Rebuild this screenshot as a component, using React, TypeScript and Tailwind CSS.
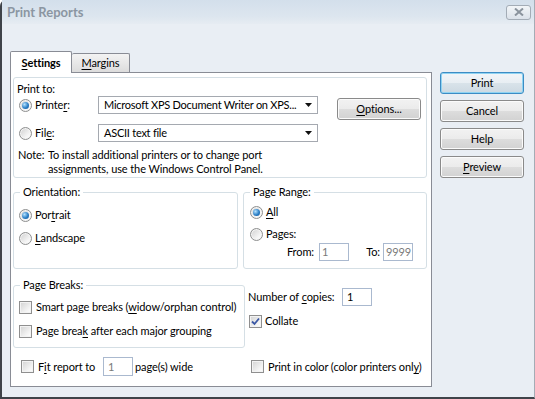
import React from "react";

function Ul({ children }: { children: React.ReactNode }) {
  return <span className="underline decoration-[1px] underline-offset-[2px]">{children}</span>;
}

function Radio({ checked }: { checked?: boolean }) {
  return (
    <span className="flex h-[13px] w-[13px] shrink-0 items-center justify-center rounded-full border border-[#8e8f8f] bg-[linear-gradient(135deg,#cfcfcf,#f6f6f6_70%,#ffffff)] shadow-[inset_0_0_0_1px_#f4f4f4]">
      {checked && (
        <span className="h-[7px] w-[7px] rounded-full bg-[radial-gradient(circle_at_35%_35%,#b4e2ff,#2b7fc6_55%,#0c4f94)]" />
      )}
    </span>
  );
}

function Check({ checked }: { checked?: boolean }) {
  return (
    <span className="flex h-[13px] w-[13px] shrink-0 items-center justify-center border border-[#8f8f8f] bg-[linear-gradient(135deg,#d2d2d2,#f4f4f4_70%,#ffffff)] shadow-[inset_0_0_0_1px_#f3f3f3]">
      {checked && (
        <svg width="11" height="11" viewBox="0 0 11 11">
          <path d="M2 5.5 L4.5 8 L9 2.5" fill="none" stroke="#3b58a5" strokeWidth="1.8" />
        </svg>
      )}
    </span>
  );
}

function Combo({ text }: { text: string }) {
  return (
    <div className="flex h-[18px] w-[220px] items-center border border-[#a5a9b0] bg-white">
      <span className="flex-1 overflow-hidden whitespace-nowrap pl-[5px] tracking-[-0.25px]">{text}</span>
      <span className="flex h-full w-[17px] shrink-0 items-center justify-center">
        <svg width="7" height="4" viewBox="0 0 7 4">
          <path d="M0 0 H7 L3.5 4 Z" fill="#111" />
        </svg>
      </span>
    </div>
  );
}

function Field({ value, dim }: { value: string; dim?: boolean }) {
  return (
    <div
      className={
        dim
          ? "flex h-[18px] w-[30px] shrink-0 items-center border border-[#aab9cf] bg-white pl-[2px] text-[#7a7a7a]"
          : "flex h-[18px] w-[30px] shrink-0 items-center border border-[#aab9cf] bg-white pl-[4px] text-black"
      }
    >
      {value}
    </div>
  );
}

function Btn({ children, focus }: { children: React.ReactNode; focus?: boolean }) {
  return (
    <div
      className={
        focus
          ? "flex h-[22px] w-[84px] items-center justify-center rounded-[3px] border border-[#3c8cc4] bg-[linear-gradient(#f1f5f8,#e8eef3_50%,#d9e3ea_50%,#cdd9e2)] shadow-[inset_0_0_0_1px_#8fd3f2]"
          : "flex h-[22px] w-[84px] items-center justify-center rounded-[3px] border border-[#8a8a8a] bg-[linear-gradient(#f2f2f2,#ebebeb_50%,#dddddd_50%,#d2d2d2)] shadow-[inset_0_0_0_1px_#fbfbfb]"
      }
    >
      {children}
    </div>
  );
}

export default function App() {
  return (
    <div className="h-[399px] w-[535px] overflow-hidden bg-white">
      <div className="flex h-[399px] w-[535px] flex-col rounded-tl-[6px] border-b-2 border-l-2 border-r border-[#3f4349] border-r-[#a4acb5] bg-[#e9eef4] font-['Segoe_UI','Lato',sans-serif] text-[11px] leading-[14px] tracking-[-0.1px] text-black">
        {/* title bar */}
        <div className="flex h-[24px] shrink-0 items-center justify-between bg-[linear-gradient(#d3dfeb,#dde6ef_70%,#e6ecf2)] pl-[5px] pr-[3px]">
          <span className="text-[13px] font-bold tracking-normal text-[#8b96a2]">Print Reports</span>
          <span className="flex h-[15px] w-[25px] items-center justify-center rounded-[3px] border border-[#a3acb6] bg-[linear-gradient(#f2f5f8,#dbe2ea)]">
            <svg width="10" height="8" viewBox="0 0 10 8">
              <path d="M1 0.5 L9 7.5 M9 0.5 L1 7.5" stroke="#8a939d" strokeWidth="2" />
            </svg>
          </span>
        </div>

        <div className="flex gap-[8px] pl-[8px] pt-[27px]">
          {/* left: tabs and panel */}
          <div className="flex w-[422px] flex-col">
            <div className="flex h-[21px] items-end">
              <div className="relative z-10 -mb-px flex h-[22px] w-[62px] items-center justify-center rounded-t-[2px] border-x border-t border-[#898c95] bg-white font-bold">
                <span>
                  <Ul>S</Ul>ettings
                </span>
              </div>
              <div className="flex h-[19px] w-[58px] items-center justify-center rounded-t-[2px] border-r border-t border-[#898c95] bg-[linear-gradient(#f3f3f3,#dcdcdc)]">
                <span>
                  <Ul>M</Ul>argins
                </span>
              </div>
            </div>

            <div className="flex h-[315px] flex-col border border-[#898c95] bg-white pl-[2px]">
              {/* Print to */}
              <div className="mt-[4px] flex h-[101px] w-[414px] flex-col rounded-[3px] border border-[#d5dfe5]">
                <div className="pl-[3px] pt-[4px]">Print to:</div>
                <div className="flex h-[18px] items-start">
                  <div className="flex h-[18px] w-[84px] items-center gap-[3px] pl-[5px]">
                    <Radio checked />
                    <span>
                      Printe<Ul>r</Ul>:
                    </span>
                  </div>
                  <Combo text="Microsoft XPS Document Writer on XPS..." />
                  <div className="ml-[19px] mt-[2px]">
                    <Btn>
                      <span>
                        <Ul>O</Ul>ptions...
                      </span>
                    </Btn>
                  </div>
                </div>
                <div className="mt-[10px] flex h-[18px] items-center">
                  <div className="flex h-[18px] w-[84px] items-center gap-[3px] pl-[5px]">
                    <Radio />
                    <span>
                      Fil<Ul>e</Ul>:
                    </span>
                  </div>
                  <Combo text="ASCII text file" />
                </div>
                <div className="mt-[6px] flex pl-[4px]">
                  <span className="w-[30px] shrink-0">Note:</span>
                  <div className="flex flex-col">
                    <span>To install additional printers or to change port</span>
                    <span>assignments, use the Windows Control Panel.</span>
                  </div>
                </div>
              </div>

              {/* Orientation + Page Range */}
              <div className="mt-[7px] flex gap-[5px]">
                <fieldset className="h-[84px] w-[225px] rounded-[3px] border border-[#d5dfe5]">
                  <legend className="ml-[6px] px-[3px] leading-[14px]">Orientation:</legend>
                  <div className="mt-[6px] flex h-[20px] items-center gap-[3px] pl-[5px]">
                    <Radio checked />
                    <span>
                      Por<Ul>t</Ul>rait
                    </span>
                  </div>
                  <div className="mt-[3px] flex h-[20px] items-center gap-[3px] pl-[5px]">
                    <Radio />
                    <span>
                      <Ul>L</Ul>andscape
                    </span>
                  </div>
                </fieldset>
                <fieldset className="h-[84px] w-[184px] rounded-[3px] border border-[#d5dfe5]">
                  <legend className="ml-[6px] px-[3px] leading-[14px]">Page Range:</legend>
                  <div className="mt-[4px] flex h-[18px] items-center gap-[3px] pl-[6px]">
                    <Radio checked />
                    <span>
                      <Ul>A</Ul>ll
                    </span>
                  </div>
                  <div className="mt-[4px] flex h-[18px] items-center gap-[3px] pl-[6px]">
                    <Radio />
                    <span>Pages:</span>
                  </div>
                  <div className="flex h-[18px] items-center">
                    <span className="w-[75px] shrink-0 pr-[5px] text-right">From:</span>
                    <Field value="1" dim />
                    <span className="w-[34px] shrink-0 pr-[3px] text-right">To:</span>
                    <Field value="9999" dim />
                  </div>
                </fieldset>
              </div>

              {/* Page breaks + copies */}
              <div className="mt-[9px] flex">
                <fieldset className="h-[70px] w-[232px] rounded-[3px] border border-[#d5dfe5]">
                  <legend className="ml-[6px] px-[3px] leading-[14px]">Page Breaks:</legend>
                  <div className="mt-[7px] flex h-[16px] items-center gap-[4px] pl-[5px]">
                    <Check />
                    <span>
                      Smart page breaks (<Ul>w</Ul>idow/orphan control)
                    </span>
                  </div>
                  <div className="mt-[8px] flex h-[16px] items-center gap-[4px] pl-[5px]">
                    <Check />
                    <span>
                      Page brea<Ul>k</Ul> after each major grouping
                    </span>
                  </div>
                </fieldset>
                <div className="ml-[3px] flex flex-col">
                  <div className="mt-[10px] flex h-[18px] items-center">
                    <span className="w-[94px] shrink-0">
                      Number of <Ul>c</Ul>opies:
                    </span>
                    <Field value="1" />
                  </div>
                  <div className="mt-[7px] flex h-[16px] items-center gap-[3px] pl-[1px]">
                    <Check checked />
                    <span>Collate</span>
                  </div>
                </div>
              </div>

              {/* bottom row */}
              <div className="mt-[9px] flex h-[19px] items-center">
                <div className="flex w-[238px] shrink-0 items-center pl-[8px]">
                  <Check />
                  <span className="ml-[4px] w-[61px] shrink-0">
                    F<Ul>i</Ul>t report to
                  </span>
                  <div className="ml-[4px] h-[19px]">
                    <div className="flex h-[19px] w-[30px] items-center border border-[#aab9cf] bg-white pl-[4px] text-[#7a7a7a]">
                      1
                    </div>
                  </div>
                  <span className="ml-[2px]">page(s) wide</span>
                </div>
                <div className="flex items-center gap-[4px]">
                  <Check />
                  <span>
                    Print in color (color printers onl<Ul>y</Ul>)
                  </span>
                </div>
              </div>
            </div>
          </div>

          {/* right: buttons */}
          <div className="flex w-[84px] flex-col gap-[6px] pt-[21px]">
            <Btn focus>Print</Btn>
            <Btn>Cancel</Btn>
            <Btn>Help</Btn>
            <Btn>
              <span>
                <Ul>P</Ul>review
              </span>
            </Btn>
          </div>
        </div>
      </div>
    </div>
  );
}
